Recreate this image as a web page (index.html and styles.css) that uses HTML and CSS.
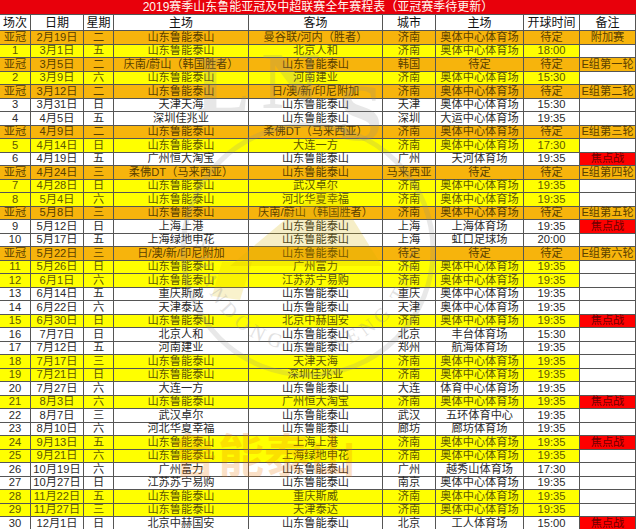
FILE: index.html
```html
<!DOCTYPE html>
<html lang="zh-CN">
<head>
<meta charset="utf-8">
<title>2019赛季山东鲁能亚冠及中超联赛全年赛程表</title>
<link rel="stylesheet" href="styles.css">
</head>
<body>
<div class="sheet">
  <div class="title">2019赛季山东鲁能亚冠及中超联赛全年赛程表（亚冠赛季待更新）</div>
  <div class="row head"><span>场次</span><span>日期</span><span>星期</span><span>主场</span><span>客场</span><span>城市</span><span>主场</span><span>开球时间</span><span>备注</span></div>
  <div class="row o"><span>亚冠</span><span>2月19日</span><span>二</span><span>山东鲁能泰山</span><span>曼谷联/河内（胜者）</span><span>济南</span><span>奥体中心体育场</span><span>待定</span><span class="note">附加赛</span></div>
  <div class="row y"><span>1</span><span>3月1日</span><span>五</span><span>山东鲁能泰山</span><span>北京人和</span><span>济南</span><span>奥体中心体育场</span><span>18:00</span><span class="note"></span></div>
  <div class="row o"><span>亚冠</span><span>3月5日</span><span>二</span><span>庆南/蔚山（韩国胜者）</span><span>山东鲁能泰山</span><span>韩国</span><span>待定</span><span>待定</span><span class="note">E组第一轮</span></div>
  <div class="row y"><span>2</span><span>3月9日</span><span>六</span><span>山东鲁能泰山</span><span>河南建业</span><span>济南</span><span>奥体中心体育场</span><span>15:30</span><span class="note"></span></div>
  <div class="row o"><span>亚冠</span><span>3月12日</span><span>二</span><span>山东鲁能泰山</span><span>日/澳/新/印尼附加</span><span>济南</span><span>奥体中心体育场</span><span>待定</span><span class="note">E组第二轮</span></div>
  <div class="row w"><span>3</span><span>3月31日</span><span>日</span><span>天津天海</span><span>山东鲁能泰山</span><span>天津</span><span>奥体中心体育场</span><span>15:30</span><span class="note"></span></div>
  <div class="row w"><span>4</span><span>4月5日</span><span>五</span><span>深圳佳兆业</span><span>山东鲁能泰山</span><span>深圳</span><span>大运中心体育场</span><span>19:35</span><span class="note"></span></div>
  <div class="row o"><span>亚冠</span><span>4月9日</span><span>二</span><span>山东鲁能泰山</span><span>柔佛DT（马来西亚）</span><span>济南</span><span>奥体中心体育场</span><span>待定</span><span class="note">E组第三轮</span></div>
  <div class="row y"><span>5</span><span>4月14日</span><span>日</span><span>山东鲁能泰山</span><span>大连一方</span><span>济南</span><span>奥体中心体育场</span><span>17:30</span><span class="note"></span></div>
  <div class="row w"><span>6</span><span>4月19日</span><span>五</span><span>广州恒大淘宝</span><span>山东鲁能泰山</span><span>广州</span><span>天河体育场</span><span>19:35</span><span class="note hot">焦点战</span></div>
  <div class="row o"><span>亚冠</span><span>4月24日</span><span>三</span><span>柔佛DT（马来西亚）</span><span>山东鲁能泰山</span><span>马来西亚</span><span>待定</span><span>待定</span><span class="note">E组第四轮</span></div>
  <div class="row y"><span>7</span><span>4月28日</span><span>日</span><span>山东鲁能泰山</span><span>武汉卓尔</span><span>济南</span><span>奥体中心体育场</span><span>19:35</span><span class="note"></span></div>
  <div class="row y"><span>8</span><span>5月4日</span><span>六</span><span>山东鲁能泰山</span><span>河北华夏幸福</span><span>济南</span><span>奥体中心体育场</span><span>19:35</span><span class="note"></span></div>
  <div class="row o"><span>亚冠</span><span>5月8日</span><span>三</span><span>山东鲁能泰山</span><span>庆南/蔚山（韩国胜者）</span><span>济南</span><span>奥体中心体育场</span><span>待定</span><span class="note">E组第五轮</span></div>
  <div class="row w"><span>9</span><span>5月12日</span><span>日</span><span>上海上港</span><span>山东鲁能泰山</span><span>上海</span><span>上海体育场</span><span>19:35</span><span class="note hot">焦点战</span></div>
  <div class="row w"><span>10</span><span>5月17日</span><span>五</span><span>上海绿地申花</span><span>山东鲁能泰山</span><span>上海</span><span>虹口足球场</span><span>20:00</span><span class="note"></span></div>
  <div class="row o"><span>亚冠</span><span>5月22日</span><span>三</span><span>日/澳/新/印尼附加</span><span>山东鲁能泰山</span><span>待定</span><span>待定</span><span>待定</span><span class="note">E组第六轮</span></div>
  <div class="row y"><span>11</span><span>5月26日</span><span>日</span><span>山东鲁能泰山</span><span>广州富力</span><span>济南</span><span>奥体中心体育场</span><span>19:35</span><span class="note"></span></div>
  <div class="row y"><span>12</span><span>6月1日</span><span>六</span><span>山东鲁能泰山</span><span>江苏苏宁易购</span><span>济南</span><span>奥体中心体育场</span><span>19:35</span><span class="note"></span></div>
  <div class="row w"><span>13</span><span>6月14日</span><span>五</span><span>重庆斯威</span><span>山东鲁能泰山</span><span>重庆</span><span>奥体中心体育场</span><span>19:35</span><span class="note"></span></div>
  <div class="row w"><span>14</span><span>6月22日</span><span>六</span><span>天津泰达</span><span>山东鲁能泰山</span><span>天津</span><span>奥体中心体育场</span><span>19:35</span><span class="note"></span></div>
  <div class="row y"><span>15</span><span>6月30日</span><span>日</span><span>山东鲁能泰山</span><span>北京中赫国安</span><span>济南</span><span>奥体中心体育场</span><span>19:35</span><span class="note hot">焦点战</span></div>
  <div class="row w"><span>16</span><span>7月7日</span><span>日</span><span>北京人和</span><span>山东鲁能泰山</span><span>北京</span><span>丰台体育场</span><span>15:30</span><span class="note"></span></div>
  <div class="row w"><span>17</span><span>7月12日</span><span>五</span><span>河南建业</span><span>山东鲁能泰山</span><span>郑州</span><span>航海体育场</span><span>19:35</span><span class="note"></span></div>
  <div class="row y"><span>18</span><span>7月17日</span><span>三</span><span>山东鲁能泰山</span><span>天津天海</span><span>济南</span><span>奥体中心体育场</span><span>19:35</span><span class="note"></span></div>
  <div class="row y"><span>19</span><span>7月21日</span><span>日</span><span>山东鲁能泰山</span><span>深圳佳兆业</span><span>济南</span><span>奥体中心体育场</span><span>19:35</span><span class="note"></span></div>
  <div class="row w"><span>20</span><span>7月27日</span><span>六</span><span>大连一方</span><span>山东鲁能泰山</span><span>大连</span><span>体育中心体育场</span><span>19:35</span><span class="note"></span></div>
  <div class="row y"><span>21</span><span>8月3日</span><span>六</span><span>山东鲁能泰山</span><span>广州恒大淘宝</span><span>济南</span><span>奥体中心体育场</span><span>19:35</span><span class="note hot">焦点战</span></div>
  <div class="row w"><span>22</span><span>8月7日</span><span>三</span><span>武汉卓尔</span><span>山东鲁能泰山</span><span>武汉</span><span>五环体育中心</span><span>19:35</span><span class="note"></span></div>
  <div class="row w"><span>23</span><span>8月10日</span><span>六</span><span>河北华夏幸福</span><span>山东鲁能泰山</span><span>廊坊</span><span>廊坊体育场</span><span>19:35</span><span class="note"></span></div>
  <div class="row y"><span>24</span><span>9月13日</span><span>五</span><span>山东鲁能泰山</span><span>上海上港</span><span>济南</span><span>奥体中心体育场</span><span>19:35</span><span class="note hot">焦点战</span></div>
  <div class="row y"><span>25</span><span>9月21日</span><span>六</span><span>山东鲁能泰山</span><span>上海绿地申花</span><span>济南</span><span>奥体中心体育场</span><span>19:35</span><span class="note"></span></div>
  <div class="row w"><span>26</span><span>10月19日</span><span>六</span><span>广州富力</span><span>山东鲁能泰山</span><span>广州</span><span>越秀山体育场</span><span>17:30</span><span class="note"></span></div>
  <div class="row w"><span>27</span><span>10月27日</span><span>日</span><span>江苏苏宁易购</span><span>山东鲁能泰山</span><span>南京</span><span>奥体中心体育场</span><span>19:35</span><span class="note"></span></div>
  <div class="row y"><span>28</span><span>11月22日</span><span>五</span><span>山东鲁能泰山</span><span>重庆斯威</span><span>济南</span><span>奥体中心体育场</span><span>19:35</span><span class="note"></span></div>
  <div class="row y"><span>29</span><span>11月27日</span><span>三</span><span>山东鲁能泰山</span><span>天津泰达</span><span>济南</span><span>奥体中心体育场</span><span>19:35</span><span class="note"></span></div>
  <div class="row w"><span>30</span><span>12月1日</span><span>日</span><span>北京中赫国安</span><span>山东鲁能泰山</span><span>北京</span><span>工人体育场</span><span>15:00</span><span class="note hot">焦点战</span></div>

  <svg class="watermark" viewBox="0 0 640 529" width="640" height="529" aria-hidden="true">
    <defs>
      <path id="ring" d="M 196 240 A 112 112 0 0 0 420 240"/>
    </defs>
    <text x="196" y="112" class="wm-big">L</text>
    <text x="262" y="108" class="wm-big">N</text>
    <text x="338" y="140" class="wm-big">S</text>
    <circle cx="308" cy="250" r="125" fill="none" stroke="#8c8c8c" stroke-width="5" opacity="0.2"/>
    <polygon points="330,182 382,266 230,266" fill="#d8b000" opacity="0.22"/>
    <polygon points="222,262 252,262 240,300 212,296" fill="#e0c000" opacity="0.2"/>
    <text class="wm-ring"><textPath href="#ring">SHANDONG LUNENG TAISHAN</textPath></text>
    <text x="172" y="472" class="wm-cn">鲁能泰山</text>
  </svg>
</div>
</body>
</html>
```

FILE: styles.css
```css
html, body {
  margin: 0;
  padding: 0;
  background: #ffffff;
}

.sheet {
  position: relative;
  width: 640px;
  height: 529px;
  overflow: hidden;
  font-family: "Liberation Sans", "Noto Sans CJK SC", sans-serif;
  font-size: 11.2px;
  color: #2b2b2b;
}

.title {
  width: 636px;
  height: 15px;
  box-sizing: border-box;
  background: #e8000b;
  color: #fff8f0;
  font-size: 12px;
  line-height: 14px;
  text-align: center;
  border-bottom: 1px solid #555;
  white-space: nowrap;
}

.row {
  display: grid;
  grid-template-columns: 31px 53px 30px 135px 134px 53px 88px 56px 56px;
  width: 636px;
  height: 13.5px;
  box-sizing: border-box;
  border-bottom: 1px solid #555;
}

.row > span {
  display: flex;
  align-items: center;
  justify-content: center;
  box-sizing: border-box;
  border-right: 1px solid #555;
  white-space: nowrap;
  line-height: 1;
}

.head {
  height: 16px;
  background: #ffffff;
  color: #111111;
  font-size: 12px;
}

.o {
  background: #f7b40c;
  color: #5a4000;
}

.y {
  background: #ffff00;
  color: #5e5800;
}

.w {
  background: #ffffff;
  color: #2b2b2b;
}

.y .note {
  background: #ffffff;
}

.note.hot {
  background: #ff0000;
  color: #6e0000;
}

.watermark {
  position: absolute;
  left: 0;
  top: 0;
  pointer-events: none;
}

.wm-big {
  font-family: "Liberation Serif", serif;
  font-size: 80px;
  font-weight: bold;
  fill: #8a8a8a;
  opacity: 0.2;
}

.wm-ring {
  font-family: "Liberation Serif", serif;
  font-size: 20px;
  letter-spacing: 5px;
  fill: #8a8a8a;
  opacity: 0.25;
}

.wm-cn {
  font-family: "Noto Sans CJK SC", sans-serif;
  font-size: 46px;
  font-weight: bold;
  fill: #f07800;
  opacity: 0.22;
}
```
